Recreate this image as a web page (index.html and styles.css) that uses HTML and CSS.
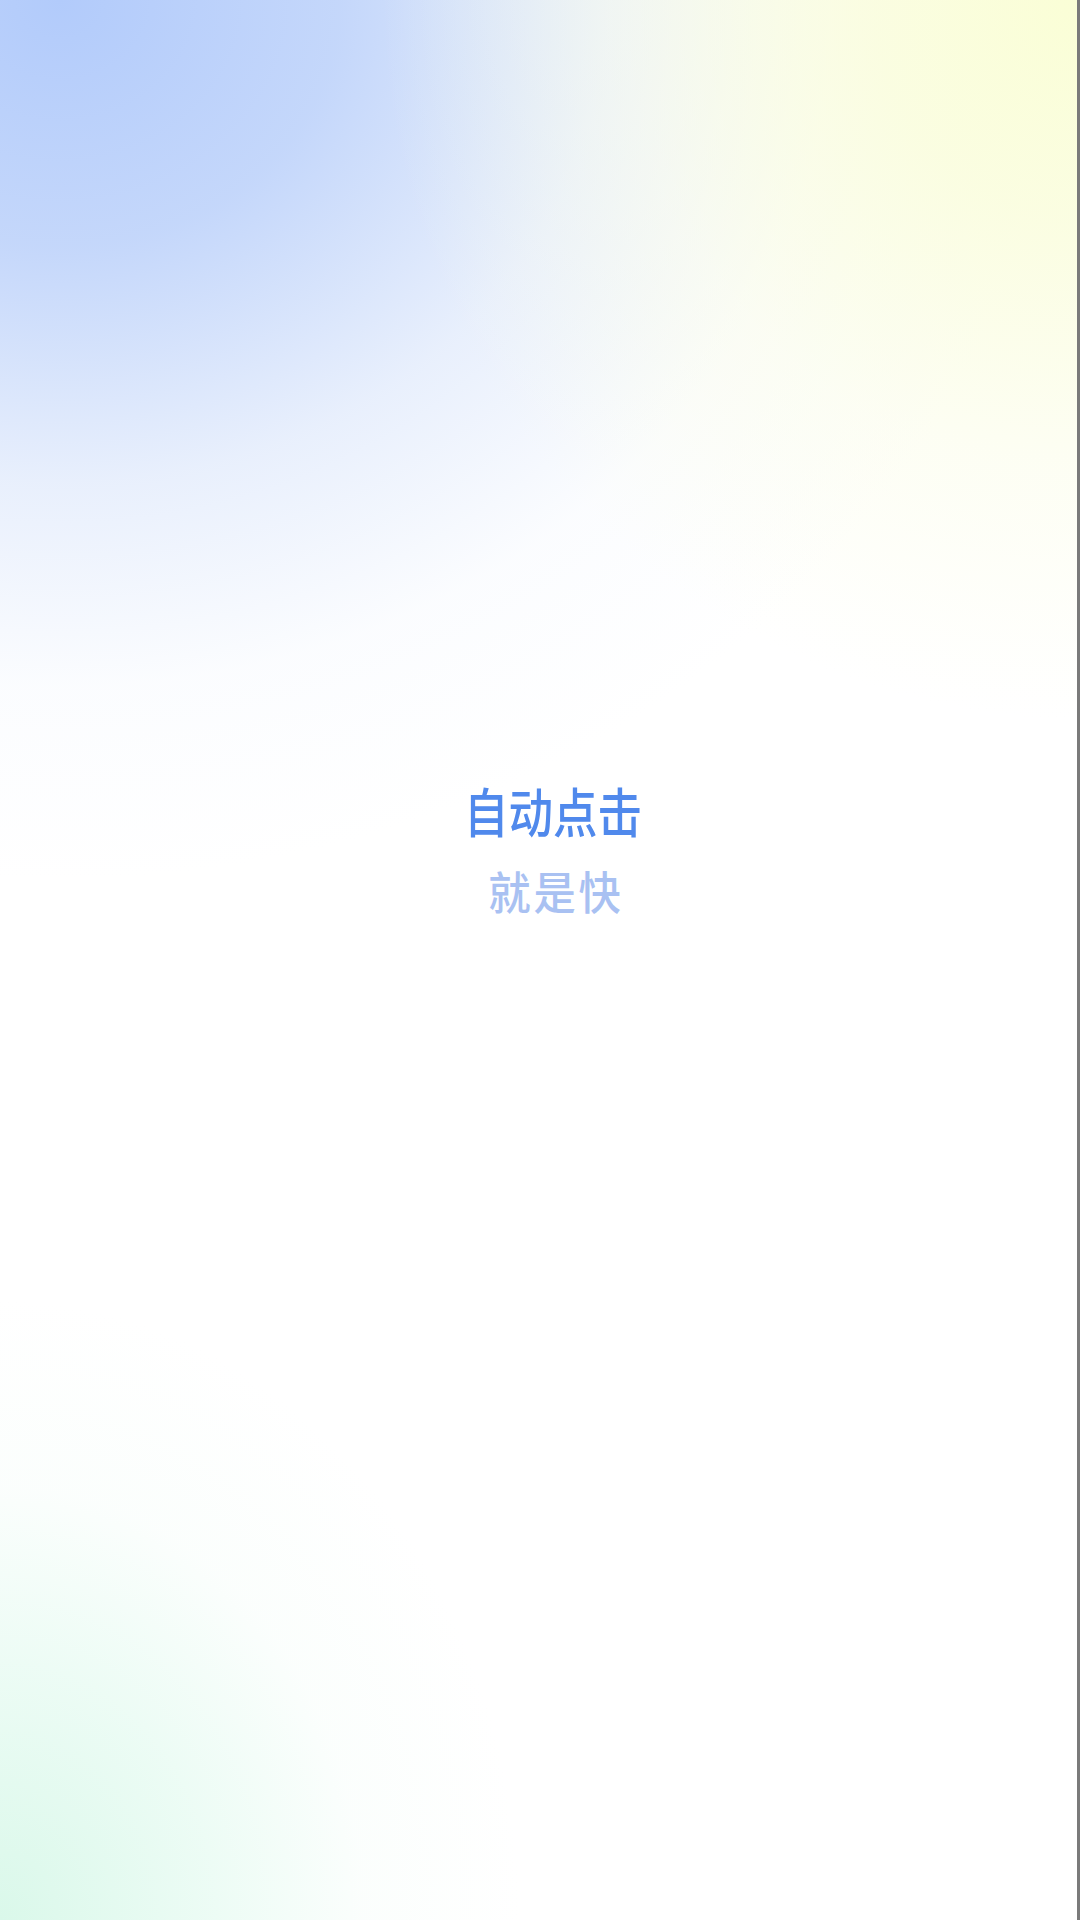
FILE: index.html
```html
<!DOCTYPE html>
<html lang="zh-CN">
<head>
    <meta charset="UTF-8">
    <title>自动点击</title>
    <link rel="stylesheet" href="styles.css">
</head>
<body>
<div class="splash">
    <div class="slogan">
        <div class="slogan-title">自动点击</div>
        <div class="slogan-sub">就是快</div>
    </div>
</div>
</body>
</html>
```
FILE: styles.css
```css
html, body {
    height: 100%;
    margin: 0;
    padding: 0;
}

body {
    background: #ffffff;
    font-family: "Noto Sans CJK SC", "Noto Sans", sans-serif;
}

.splash {
    box-sizing: border-box;
    width: 1080px;
    height: 1920px;
    border-right: 3px solid #7a7a7a;
    background:
        radial-gradient(ellipse 700px 720px at 1080px 0px, rgba(250, 254, 214, 1) 0%, rgba(250, 253, 220, 0.85) 30%, rgba(251, 253, 230, 0.45) 65%, rgba(255, 255, 255, 0) 100%),
        radial-gradient(ellipse 1000px 880px at 60px 0px, rgba(178, 203, 251, 1) 0%, rgba(186, 208, 250, 0.85) 28%, rgba(210, 224, 250, 0.5) 55%, rgba(235, 242, 253, 0.2) 78%, rgba(255, 255, 255, 0) 100%),
        radial-gradient(ellipse 520px 620px at 0px 1920px, rgba(218, 248, 234, 1) 0%, rgba(226, 250, 239, 0.65) 40%, rgba(240, 252, 246, 0.25) 70%, rgba(255, 255, 255, 0) 100%),
        #ffffff;
    display: flex;
    flex-direction: column;
    align-items: center;
    padding-top: 780px;
    padding-left: 28px;
}

.slogan {
    display: flex;
    flex-direction: column;
    align-items: center;
}

/* the original face is narrower than Noto, so squeeze it a bit */
.slogan-title {
    font-size: 53px;
    line-height: 60px;
    font-weight: 500;
    letter-spacing: 0;
    color: #5089ec;
    transform: scaleX(0.84);
}

.slogan-sub {
    margin-top: 24px;
    margin-left: 8px;
    font-size: 45px;
    line-height: 53px;
    font-weight: 500;
    letter-spacing: 3px;
    color: #a9c1f2;
    transform: scaleX(0.94);
}
```
